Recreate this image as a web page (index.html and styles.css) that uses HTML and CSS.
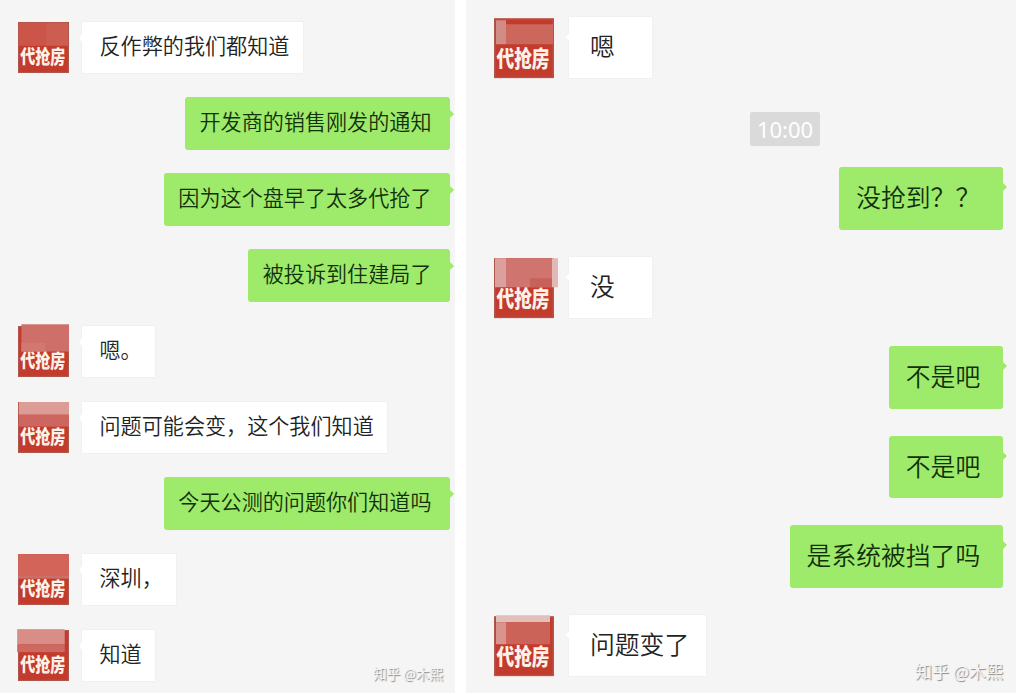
FILE: index.html
```
<!DOCTYPE html>
<html lang="zh-CN">
<head>
    <meta charset="UTF-8">
    <meta name="viewport" content="width=device-width, initial-scale=1.0">
    <title>聊天记录</title>
    <link rel="stylesheet" href="styles.css">
</head>
<body>
    <!-- Shared avatar artwork -->
    <svg class="defs">
        <symbol id="avatar" viewBox="0 0 60 60">
            <rect width="60" height="60" fill="#c23b2d"/>
            <rect x="0.75" y="0.75" width="58.5" height="58.5" fill="none" stroke="#b0564a" stroke-width="1.5"/>
            <text class="avatar-text" transform="translate(2.5 49) scale(1 1.25)" textLength="53" lengthAdjust="spacingAndGlyphs">代抢房</text>
        </symbol>
    </svg>

    <div class="container">
        <!-- Left chat -->
        <div class="chat chat-left">
            <div class="row">
                <svg class="avatar" viewBox="0 0 60 60">
                    <use href="#avatar"/>
                    <rect x="1" y="1" width="32" height="27" fill="#cc5549"/>
                    <rect x="33" y="1" width="26" height="27" fill="#cb5e51"/>
                </svg>
                <div class="bubble">反作弊的我们都知道</div>
            </div>
            <div class="row mine"><div class="bubble">开发商的销售刚发的通知</div></div>
            <div class="row mine"><div class="bubble">因为这个盘早了太多代抢了</div></div>
            <div class="row mine"><div class="bubble">被投诉到住建局了</div></div>
            <div class="row">
                <svg class="avatar" viewBox="0 0 60 60">
                    <use href="#avatar"/>
                    <rect x="4" y="-2" width="56" height="32" fill="#cf6f69"/>
                    <rect x="4" y="20" width="28" height="10" fill="#d27871"/>
                </svg>
                <div class="bubble">嗯。</div>
            </div>
            <div class="row">
                <svg class="avatar" viewBox="0 0 60 60">
                    <use href="#avatar"/>
                    <rect x="1" y="0" width="59" height="15" fill="#dc9d97"/>
                    <rect x="1" y="15" width="59" height="14" fill="#cd6560"/>
                </svg>
                <div class="bubble">问题可能会变，这个我们知道</div>
            </div>
            <div class="row mine"><div class="bubble">今天公测的问题你们知道吗</div></div>
            <div class="row">
                <svg class="avatar" viewBox="0 0 60 60">
                    <use href="#avatar"/>
                    <rect x="0" y="0" width="60" height="25" fill="#d2645a"/>
                    <rect x="0" y="25" width="60" height="4" fill="#cb7068"/>
                </svg>
                <div class="bubble">深圳，</div>
            </div>
            <div class="row">
                <svg class="avatar" viewBox="0 0 60 60">
                    <use href="#avatar"/>
                    <rect x="-1" y="-1" width="56" height="18" fill="#d88d87"/>
                    <rect x="-1" y="17" width="56" height="9" fill="#cc6a61"/>
                </svg>
                <div class="bubble">知道</div>
            </div>
            <div class="watermark">知乎 @木熙</div>
        </div>

        <!-- Right chat -->
        <div class="chat chat-right">
            <div class="row">
                <svg class="avatar" viewBox="0 0 60 60">
                    <use href="#avatar"/>
                    <rect x="2" y="2" width="10" height="24" fill="#d28c86"/>
                    <rect x="12" y="6" width="47" height="20" fill="#cb675b"/>
                </svg>
                <div class="bubble">嗯</div>
            </div>
            <div class="time-row"><span class="time">10:00</span></div>
            <div class="row mine"><div class="bubble">没抢到？？</div></div>
            <div class="row">
                <svg class="avatar" viewBox="0 0 60 60">
                    <use href="#avatar"/>
                    <rect x="1" y="0" width="11" height="29" fill="#dba09c"/>
                    <rect x="12" y="0" width="46" height="29" fill="#cf746f"/>
                    <rect x="36" y="20" width="22" height="9" fill="#c9615b"/>
                    <rect x="58" y="0" width="6" height="29" fill="#e3b9b6"/>
                </svg>
                <div class="bubble">没</div>
            </div>
            <div class="row mine"><div class="bubble">不是吧</div></div>
            <div class="row mine"><div class="bubble">不是吧</div></div>
            <div class="row mine"><div class="bubble">是系统被挡了吗</div></div>
            <div class="row">
                <svg class="avatar" viewBox="0 0 60 60">
                    <use href="#avatar"/>
                    <rect x="2" y="-1" width="54" height="7" fill="#e3bfbb"/>
                    <rect x="2" y="6" width="10" height="22" fill="#d9948d"/>
                    <rect x="12" y="6" width="44" height="22" fill="#cb6358"/>
                </svg>
                <div class="bubble">问题变了</div>
            </div>
            <div class="watermark">知乎 @木熙</div>
        </div>
    </div>
</body>
</html>
```
FILE: styles.css
```
body {
    margin: 0;
    background-color: #fff;
    font-family: "Noto Sans CJK SC", sans-serif;
    font-weight: 350;
    color: #222;
}
.defs {
    display: none;
}
.container {
    display: flex;
    gap: 11px;
    width: 1016px;
    height: 694px;
    overflow: hidden;
}
.chat {
    position: relative;
    display: flex;
    flex-direction: column;
    box-sizing: border-box;
    height: 693px;
    background-color: #f5f5f5;
}
.chat-left {
    width: 455px;
    padding: 21px 5px 0 18px;
    gap: 23px;
    font-size: 21.1px;
}
.chat-right {
    width: 550px;
    padding: 16.5px 13px 0 28px;
    gap: 27px;
    font-size: 24.8px;
}
.row {
    display: flex;
    flex-shrink: 0;
    align-items: center;
}
.chat-left .row {
    height: 53px;
    gap: 13px;
}
.chat-right .row {
    height: 62.5px;
    gap: 15px;
}
.row.mine {
    justify-content: flex-end;
}
.avatar {
    width: 51px;
    height: 51px;
    overflow: visible;
}
.chat-right .avatar {
    width: 60px;
    height: 60.5px;
}
.avatar-text {
    font-size: 18px;
    font-weight: 900;
    fill: #fdf1e8;
}
.bubble {
    position: relative;
    box-sizing: border-box;
    height: 51px;
    padding: 0 13.5px 0 17.5px;
    line-height: 47px;
    white-space: nowrap;
    background-color: #fff;
    box-shadow: 0 0 1px #ddd;
}
.chat-right .bubble {
    min-width: 83px;
    height: 61px;
    padding: 0 17px 0 21px;
    line-height: 57px;
}
.mine .bubble {
    height: 53px;
    padding: 0 18.5px 0 14.5px;
    line-height: 49px;
    border-radius: 3px;
    background-color: #9eea6a;
    box-shadow: none;
    color: #12300a;
}
.chat-right .mine .bubble {
    height: 62.5px;
    padding: 0 22.8px 0 17px;
    line-height: 58px;
}
/* Bubble tails */
.bubble::before {
    content: "";
    position: absolute;
    top: 12px;
    left: -3px;
    border: 4px solid transparent;
    border-left-width: 0;
    border-right-width: 3px;
    border-right-color: #fff;
}
.mine .bubble::before {
    top: 13px;
    left: auto;
    right: -4px;
    border: 4px solid transparent;
    border-right-width: 0;
    border-left-color: #9eea6a;
}
.chat-right .bubble::before {
    top: 16px;
}
.time-row {
    display: flex;
    justify-content: center;
    margin: 6px 0 -6px 73px;
}
.time {
    width: 70px;
    height: 34px;
    border-radius: 2px;
    background-color: #dadada;
    color: #fff;
    font-family: "Noto Sans", sans-serif;
    font-size: 22px;
    font-weight: 400;
    line-height: 34px;
    text-align: center;
}
.watermark {
    position: absolute;
    right: 12px;
    bottom: 10px;
    color: #f4f4f4;
    font-size: 13.5px;
    font-weight: 400;
    line-height: 20px;
    text-shadow: 1px 1px 1px #888;
}
.chat-right .watermark {
    right: 13px;
    bottom: 10px;
    font-size: 17px;
    line-height: 24px;
}
```
